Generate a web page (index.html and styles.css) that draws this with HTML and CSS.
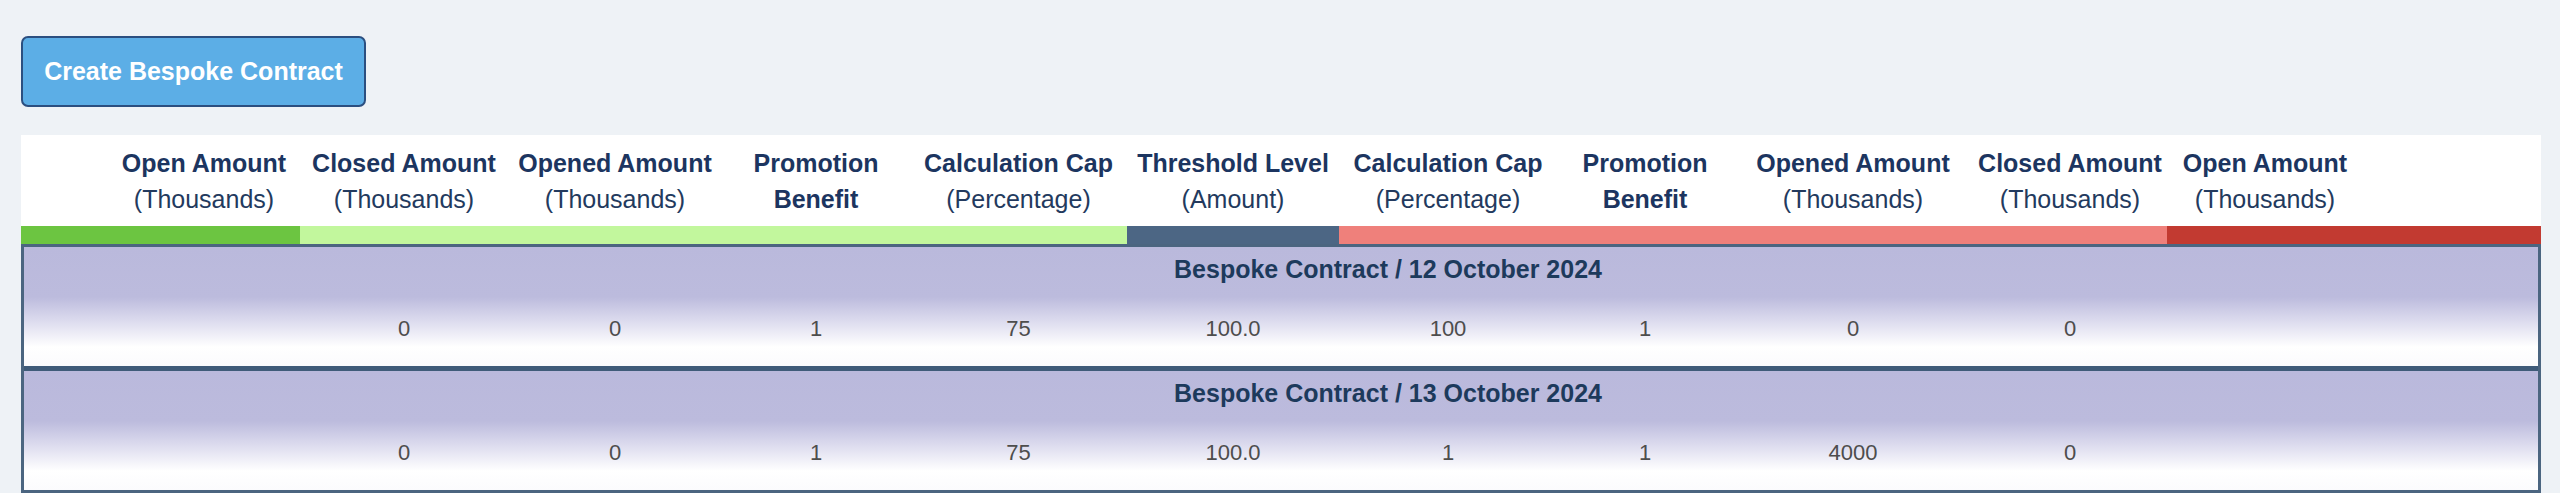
FILE: index.html
```html
<!DOCTYPE html>
<html lang="en">
<head>
<meta charset="utf-8">
<title>Bespoke Contracts</title>
<link rel="stylesheet" href="styles.css">
</head>
<body>
<div class="page">
  <button class="create-btn" type="button">Create Bespoke Contract</button>

  <section class="table">
    <div class="head">
      <div class="hcell hcell--lead"></div>
      <div class="hcell"><b>Open Amount</b><span>(Thousands)</span></div>
      <div class="hcell"><b>Closed Amount</b><span>(Thousands)</span></div>
      <div class="hcell"><b>Opened Amount</b><span>(Thousands)</span></div>
      <div class="hcell"><b>Promotion</b><b>Benefit</b></div>
      <div class="hcell"><b>Calculation Cap</b><span>(Percentage)</span></div>
      <div class="hcell"><b>Threshold Level</b><span>(Amount)</span></div>
      <div class="hcell"><b>Calculation Cap</b><span>(Percentage)</span></div>
      <div class="hcell"><b>Promotion</b><b>Benefit</b></div>
      <div class="hcell"><b>Opened Amount</b><span>(Thousands)</span></div>
      <div class="hcell"><b>Closed Amount</b><span>(Thousands)</span></div>
      <div class="hcell"><b>Open Amount</b><span>(Thousands)</span></div>
      <div class="hcell hcell--trail"></div>
    </div>

    <div class="bars">
      <div class="bar bar--green"></div>
      <div class="bar bar--lime"></div>
      <div class="bar bar--slate"></div>
      <div class="bar bar--salmon"></div>
      <div class="bar bar--red"></div>
    </div>

    <div class="body">
      <div class="row">
        <div class="row-title">Bespoke Contract / 12 October 2024</div>
        <div class="val c3">0</div>
        <div class="val c4">0</div>
        <div class="val c5">1</div>
        <div class="val c6">75</div>
        <div class="val c7">100.0</div>
        <div class="val c8">100</div>
        <div class="val c9">1</div>
        <div class="val c10">0</div>
        <div class="val c11">0</div>
      </div>
      <div class="row">
        <div class="row-title">Bespoke Contract / 13 October 2024</div>
        <div class="val c3">0</div>
        <div class="val c4">0</div>
        <div class="val c5">1</div>
        <div class="val c6">75</div>
        <div class="val c7">100.0</div>
        <div class="val c8">1</div>
        <div class="val c9">1</div>
        <div class="val c10">4000</div>
        <div class="val c11">0</div>
      </div>
    </div>
  </section>
</div>
</body>
</html>
```

FILE: styles.css
```css
* { box-sizing: border-box; }

html, body {
  margin: 0;
  padding: 0;
  background: #eef2f6;
  font-family: "Liberation Sans", Arial, Helvetica, sans-serif;
}

.page {
  padding: 36px 19px 0 21px;
  height: 493px;
  overflow: hidden;
}

.create-btn {
  display: block;
  height: 71px;
  width: 345px;
  padding: 0;
  background: #5caee6;
  color: #ffffff;
  border: 2px solid #2b4f80;
  border-radius: 7px;
  font-family: inherit;
  font-weight: bold;
  font-size: 25px;
  text-align: center;
}

.table {
  margin-top: 28px;
  width: 2520px;
}

.head,
.bars {
  display: grid;
  grid-template-columns: 87px 192px 208px 214px 188px 217px 212px 218px 176px 240px 194px 196px 1fr;
}

.head {
  background: #ffffff;
  padding: 10px 0 9px;
}

.hcell {
  display: flex;
  flex-direction: column;
  align-items: center;
  color: #1c3560;
  font-size: 25px;
  line-height: 36px;
  white-space: nowrap;
}

.hcell b { font-weight: bold; }
.hcell span { font-weight: normal; color: #233a5e; }

.bars { height: 18px; }
.bar--green { grid-column: 1 / 3; background: #6cc541; }
.bar--lime { grid-column: 3 / 7; background: #c2f79d; }
.bar--slate { grid-column: 7 / 8; background: #4c6684; }
.bar--salmon { grid-column: 8 / 12; background: #ef807b; }
.bar--red { grid-column: 12 / 14; background: #c23a31; }

.body {
  border: 3px solid #4b6580;
}

.row {
  display: grid;
  grid-template-columns: 84px 192px 208px 214px 188px 217px 212px 218px 176px 240px 194px 196px 1fr;
  grid-template-rows: 30px 30px;
  row-gap: 30px;
  padding: 7px 0 22px;
  background: linear-gradient(to bottom, #bab9dc 0%, #bcbbdd 42%, #dcdbee 62%, #ffffff 84%, #fbfbfd 100%);
}

.row + .row {
  border-top: 5px solid #3f5b79;
}

.row-title {
  grid-column: 1 / -1;
  grid-row: 1;
  text-align: center;
  padding-left: 214px;
  font-size: 25px;
  line-height: 30px;
  font-weight: bold;
  color: #1d3a5c;
}

.val {
  grid-row: 2;
  text-align: center;
  font-size: 22px;
  line-height: 30px;
  color: #4d4d4d;
}

.c3 { grid-column: 3; }
.c4 { grid-column: 4; }
.c5 { grid-column: 5; }
.c6 { grid-column: 6; }
.c7 { grid-column: 7; }
.c8 { grid-column: 8; }
.c9 { grid-column: 9; }
.c10 { grid-column: 10; }
.c11 { grid-column: 11; }
```
